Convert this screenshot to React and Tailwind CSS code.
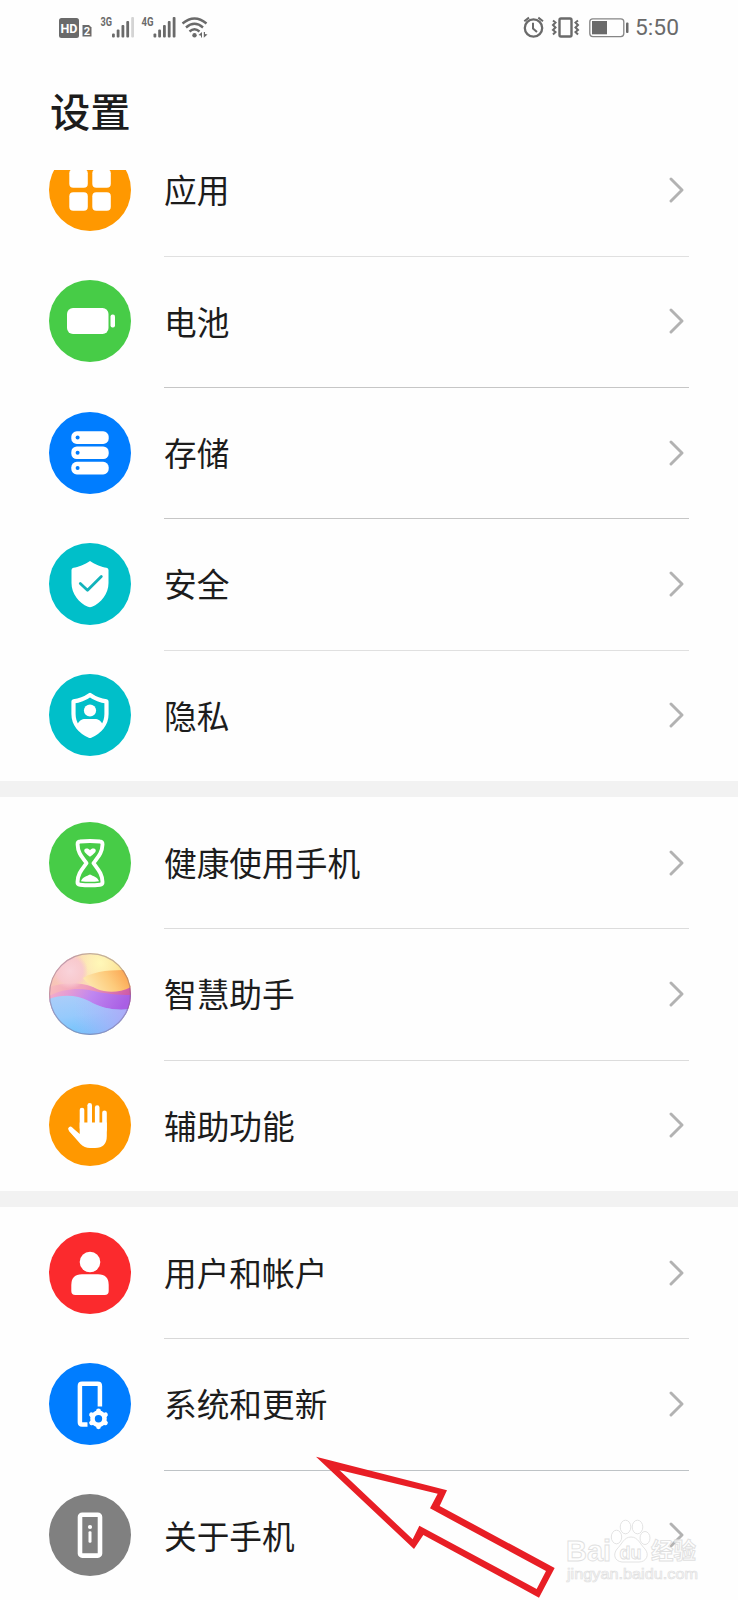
const CHEVRON = (
  <svg className="mb-px h-[26px] w-4 shrink-0" viewBox="0 0 16 26" fill="none" stroke="#b2b2b2" strokeWidth="2.9" strokeLinecap="round" strokeLinejoin="round">
    <path d="M2 2 L13 13 L2 24" />
  </svg>
);

function Disc({ fill, children }) {
  return (
    <svg className="h-[82px] w-[82px] shrink-0" viewBox="0 0 82 82">
      <circle cx="41" cy="41" r="41" fill={fill} />
      {children}
    </svg>
  );
}

const AppsIcon = () => (
  <Disc fill="#ff9800">
    <g fill="#fff">
      <rect x="20.3" y="20.3" width="18.5" height="18.5" rx="4" />
      <rect x="43.3" y="20.3" width="18.5" height="18.5" rx="4" />
      <rect x="20.3" y="43.3" width="18.5" height="18.5" rx="4" />
      <rect x="43.3" y="43.3" width="18.5" height="18.5" rx="4" />
    </g>
  </Disc>
);

const BatteryIcon = () => (
  <Disc fill="#47cc47">
    <rect x="18" y="28" width="41.5" height="26" rx="6" fill="#fff" />
    <rect x="61.5" y="34.5" width="4.5" height="13" rx="2" fill="#fff" />
  </Disc>
);

const StorageIcon = () => (
  <Disc fill="#007dff">
    {[19.3, 34.5, 49.8].map((y) => (
      <g key={y}>
        <rect x="22.3" y={y} width="37.4" height="12.6" rx="5.5" fill="#fff" />
        <circle cx="28.6" cy={y + 6.3} r="2" fill="#007dff" />
      </g>
    ))}
  </Disc>
);

const SecurityIcon = () => (
  <Disc fill="#00bfc9">
    <path d="M41 18 C46 21.5 53 24 57.5 24.8 Q59.5 25.2 59.5 27 V40 C59.5 51 52 60 43 63.8 Q41 64.6 39 63.8 C30 60 22.5 51 22.5 40 V27 Q22.5 25.2 24.5 24.8 C29 24 36 21.5 41 18 Z" fill="#fff" />
    <path d="M31.3 40.5 L38.5 47.3 L52.3 33.4" fill="none" stroke="#12b3bb" strokeWidth="2.8" strokeLinecap="round" strokeLinejoin="round" />
  </Disc>
);

const PrivacyIcon = () => (
  <Disc fill="#00bfc9">
    <path d="M41 21 C46 24.5 52 26.8 57.5 27.4 V40 C57.5 50 51 57.8 41 62 C31 57.8 24.5 50 24.5 40 V27.4 C30 26.8 36 24.5 41 21 Z" fill="none" stroke="#fff" strokeWidth="4.2" strokeLinejoin="round" />
    <circle cx="41" cy="36.5" r="6.1" fill="#fff" />
    <path d="M28.5 50.5 C30 46.5 33 45 36 45 H46 C49 45 52 46.5 53.5 50.5 C50.5 56 47 60 41 63 C35 60 31.5 56 28.5 50.5 Z" fill="#fff" />
  </Disc>
);

const HourglassIcon = () => (
  <Disc fill="#47cc47">
    <path d="M28.6 22.5 Q28.4 19.7 31 19.5 Q41 18.5 51 19.5 Q53.6 19.7 53.5 22.5 C53.2 31 49 35 44.5 41.2 C49 47.5 53.2 51.5 53.5 60 Q53.6 62.5 51 62.7 Q41 63.8 31 62.7 Q28.4 62.5 28.5 60 C28.8 51.5 33 47.5 37.5 41.2 C33 35 28.8 31 28.6 22.5 Z" fill="none" stroke="#fff" strokeWidth="3.9" strokeLinejoin="round" />
    <path d="M41 34.8 C37.5 32 35.2 30.3 35.2 28.4 C35.3 26.3 39.5 25.8 41 28.2 C42.5 25.8 46.7 26.3 46.8 28.4 C46.8 30.3 44.5 32 41 34.8 Z" fill="#fff" />
    <path d="M32 59.2 C33 55.5 38 54 41 52.5 C44 54 49 55.5 50 59.2 Q41 60.2 32 59.2 Z" fill="#fff" />
  </Disc>
);

const AssistantIcon = () => (
  <svg className="h-[82px] w-[82px] shrink-0" viewBox="0 0 82 82">
    <defs>
      <linearGradient id="orbSky" x1="0" y1="0.2" x2="1" y2="0">
        <stop offset="0" stopColor="#f7c3b8" />
        <stop offset="0.5" stopColor="#fce0b4" />
        <stop offset="1" stopColor="#fbe27c" />
      </linearGradient>
      <linearGradient id="orbOrange" x1="0" y1="0.6" x2="1" y2="0.3">
        <stop offset="0" stopColor="#fdebb4" />
        <stop offset="0.55" stopColor="#fdcb7c" />
        <stop offset="1" stopColor="#fba24e" />
      </linearGradient>
      <linearGradient id="orbPink" x1="0" y1="0" x2="1" y2="0.2">
        <stop offset="0" stopColor="#f8bdbc" />
        <stop offset="0.45" stopColor="#f0a0bc" />
        <stop offset="1" stopColor="#cf5ba8" />
      </linearGradient>
      <linearGradient id="orbViolet" x1="0" y1="0" x2="1" y2="0.2">
        <stop offset="0" stopColor="#f5b0c8" />
        <stop offset="0.25" stopColor="#e59cd4" />
        <stop offset="0.55" stopColor="#bf86f0" />
        <stop offset="1" stopColor="#a95fe4" />
      </linearGradient>
      <linearGradient id="orbBlue" x1="0.2" y1="0" x2="0.5" y2="1">
        <stop offset="0" stopColor="#aacdf9" />
        <stop offset="0.5" stopColor="#96cafc" />
        <stop offset="1" stopColor="#6cc2fb" />
      </linearGradient>
      <linearGradient id="orbRight" x1="0" y1="0" x2="1" y2="0">
        <stop offset="0.3" stopColor="#b9b4fa" stopOpacity="0" />
        <stop offset="1" stopColor="#ada8f8" />
      </linearGradient>
      <radialGradient id="orbGlow">
        <stop offset="0" stopColor="#fff8b8" />
        <stop offset="1" stopColor="#fff8b8" stopOpacity="0" />
      </radialGradient>
      <radialGradient id="orbBlush">
        <stop offset="0" stopColor="#f9d3da" />
        <stop offset="0.7" stopColor="#f8c8d0" stopOpacity="0.9" />
        <stop offset="1" stopColor="#f8c4ce" stopOpacity="0" />
      </radialGradient>
      <clipPath id="orbClip"><circle cx="41" cy="41" r="41" /></clipPath>
    </defs>
    <g clipPath="url(#orbClip)">
      <rect width="82" height="82" fill="url(#orbSky)" />
      <circle cx="51" cy="10" r="24" fill="url(#orbGlow)" />
      <path d="M0 34 C12 30 25 29 38 32 C55 38 68 38 82 32 V60 H0 Z" fill="url(#orbPink)" />
      <circle cx="21" cy="18" r="18" fill="url(#orbBlush)" />
      <path d="M34 25 C48 17 62 17 82 17 V34 C70 40 58 40 48 36 C42 33 38 30 34 25 Z" fill="url(#orbOrange)" />
      <path d="M0 43 C14 36 28 35 40 37 C56 41 70 42 82 42 V62 H0 Z" fill="url(#orbViolet)" />
      <path d="M0 46 C14 41 28 42 40 48 C54 56 68 58 82 56 V82 H0 Z" fill="url(#orbBlue)" />
      <path d="M0 46 C14 41 28 42 40 48 C54 56 68 58 82 56 V82 H0 Z" fill="url(#orbRight)" />
    </g>
    <circle cx="41" cy="41" r="40.4" fill="none" stroke="#7a5f80" strokeOpacity="0.45" strokeWidth="1.1" />
  </svg>
);

const HandIcon = () => (
  <Disc fill="#ff9800">
    <g fill="none" stroke="#fff" strokeLinecap="round" strokeWidth="4.6">
      <path d="M33 26 V44" />
      <path d="M40.7 21.2 V44" />
      <path d="M48.2 23.5 V44" />
      <path d="M55.5 28.7 V46" />
      <path d="M21.5 45 L33 57" />
    </g>
    <path d="M30.7 38.5 H57.8 V52 Q57.8 64 46 64 H41 Q35.5 64 31.5 60 L19.8 46.7 L23 43.5 L30.7 50 Z" fill="#fff" />
  </Disc>
);

const UserIcon = () => (
  <Disc fill="#fb2a2d">
    <circle cx="41" cy="30" r="10.3" fill="#fff" />
    <path d="M22.3 53 Q22.3 42.3 33 42.3 H49 Q59.7 42.3 59.7 53 V59 Q59.7 63 55.7 63 H26.3 Q22.3 63 22.3 59 Z" fill="#fff" />
  </Disc>
);

const SystemIcon = () => (
  <Disc fill="#007dff">
    <path d="M38.5 61.5 H33 Q30.9 61.5 30.9 59.3 V23 Q30.9 20.8 33 20.8 H48.7 Q50.9 20.8 50.9 23 V43.5" fill="none" stroke="#fff" strokeWidth="4.5" />
    <circle cx="49.5" cy="55.8" r="11.3" fill="#007dff" />
    <circle cx="49.5" cy="55.8" r="6" fill="none" stroke="#fff" strokeWidth="4.6" />
    <g stroke="#fff" strokeWidth="4.8" strokeLinecap="round">
      {[0, 60, 120, 180, 240, 300].map((a) => (
        <path key={a} d="M49.5 48.2 V47.8" transform={`rotate(${a} 49.5 55.8)`} />
      ))}
    </g>
  </Disc>
);

const AboutIcon = () => (
  <Disc fill="#808080">
    <rect x="31" y="20.7" width="20" height="40.9" rx="2.2" fill="none" stroke="#fff" strokeWidth="4.6" />
    <circle cx="41" cy="33" r="2.1" fill="#fff" />
    <rect x="39.5" y="37.3" width="3" height="11.5" rx="1.2" fill="#fff" />
  </Disc>
);

const GROUPS = [
  [
    { label: "应用", Icon: AppsIcon, line: "border-transparent", iconClass: "[clip-path:inset(21px_0_0_0)]" },
    { label: "电池", Icon: BatteryIcon, line: "border-[#e0e0e0]" },
    { label: "存储", Icon: StorageIcon, line: "border-[#c6c6c6]" },
    { label: "安全", Icon: SecurityIcon, line: "border-[#c6c6c6]" },
    { label: "隐私", Icon: PrivacyIcon, line: "border-[#e0e0e0]" },
  ],
  [
    { label: "健康使用手机", Icon: HourglassIcon, line: "border-transparent" },
    { label: "智慧助手", Icon: AssistantIcon, line: "border-[#dcdcdc]" },
    { label: "辅助功能", Icon: HandIcon, line: "border-[#dcdcdc]" },
  ],
  [
    { label: "用户和帐户", Icon: UserIcon, line: "border-transparent" },
    { label: "系统和更新", Icon: SystemIcon, line: "border-[#d8d8d8]" },
    { label: "关于手机", Icon: AboutIcon, line: "border-[#bec3c6]" },
  ],
];

function Row({ label, Icon, line, iconClass = "" }) {
  return (
    <li className="flex h-[131.33px] pl-[49px]">
      <div className="flex items-center pr-[33px]">
        <div className={iconClass}>
          <Icon />
        </div>
      </div>
      <div className={`flex w-[525px] items-center justify-between border-t pr-1 ${line}`}>
        <span className="mb-[2px] text-[32.7px] leading-none text-[#1c1c1c]">{label}</span>
        {CHEVRON}
      </div>
    </li>
  );
}

function StatusBar() {
  return (
    <header className="flex h-[56px] shrink-0 items-center justify-between pr-[59px] pl-[56px]">
      <svg className="h-[56px] w-[160px]" viewBox="56 0 160 56" fontFamily="Roboto, sans-serif" fill="#6a6a6a">
        <rect x="59" y="18" width="20" height="20" rx="2.5" />
        <text x="60.5" y="33" fontSize="13.5" fontWeight="700" fill="#fff" textLength="17" lengthAdjust="spacingAndGlyphs">HD</text>
        <path d="M82.5 25 H89 L91.5 27.5 V36.5 H82.5 Z" />
        <text x="83.8" y="35" fontSize="11" fontWeight="700" fill="#fff" textLength="6.4" lengthAdjust="spacingAndGlyphs">2</text>
        <text x="100.5" y="26.3" fontSize="13" fontWeight="700" textLength="11.5" lengthAdjust="spacingAndGlyphs">3G</text>
        <text x="141.5" y="26.3" fontSize="13" fontWeight="700" textLength="12" lengthAdjust="spacingAndGlyphs">4G</text>
        {[112, 153.5].map((x, i) => (
          <g key={x}>
            <rect x={x} y="33.5" width="2.8" height="4" rx="1" />
            <rect x={x + 4.7} y="29.5" width="2.8" height="8" rx="1" />
            <rect x={x + 9.5} y="25" width="2.8" height="12.5" rx="1" />
            <rect x={x + 14.3} y="21" width="2.8" height="16.5" rx="1" />
            <rect x={x + 19.2} y="17" width="2.8" height="20.5" rx="1" fill={i ? "#6a6a6a" : "#d4d4d4"} />
          </g>
        ))}
        <g fill="none" stroke="#6a6a6a" strokeWidth="2.4">
          <path d="M182.5 23.5 Q194.5 13.5 206.5 23.5" />
          <path d="M186 27.5 Q194.5 20 203 27.5" />
          <path d="M189.5 31.5 Q194.5 27 199.5 31.5" />
        </g>
        <circle cx="194.5" cy="35.2" r="2.2" />
        <path d="M198.5 35 L202 32 V37.5 H201 V35.8 Z M203.8 32 H205 V34 L207.5 34.6 L203.8 37.8 Z" />
      </svg>
      <div className="flex items-center">
        <svg className="h-[56px] w-[110px]" viewBox="520 0 110 56" fill="none" stroke="#6a6a6a">
          <circle cx="533.5" cy="28" r="8.7" strokeWidth="2.3" />
          <path d="M533 22.8 V28.5 L537 32" strokeWidth="2" />
          <path d="M524.3 21.3 L529 17.6 M543 21.3 L538.3 17.6" strokeWidth="2" />
          <rect x="559.5" y="18.5" width="12" height="18" rx="1.5" strokeWidth="2.4" />
          <path d="M553 20.5 L555.5 22.5 L553 25 L555.5 27.5 L553 30 L555.5 32 L553 34.5 M578 20.5 L575.5 22.5 L578 25 L575.5 27.5 L578 30 L575.5 32 L578 34.5" strokeWidth="2" />
          <rect x="589.8" y="18.8" width="34" height="17.8" rx="3" strokeWidth="1.3" stroke="#858585" />
          <rect x="592" y="21" width="15" height="13.3" fill="#6a6a6a" stroke="none" />
          <rect x="626" y="22.5" width="2.5" height="10.5" rx="1" fill="#6a6a6a" stroke="none" />
        </svg>
        <span className="ml-[5px] pt-px font-[Roboto,sans-serif] text-[22.8px] leading-none text-[#6a6a6a]">5:50</span>
      </div>
    </header>
  );
}

function Watermark() {
  return (
    <svg className="absolute top-[1515px] left-[562px] h-[72px] w-[142px]" viewBox="562 1515 142 72" fill="#fff" fillOpacity="0.75" stroke="#e0e0e0" strokeWidth="0.9" fontFamily="'Liberation Sans', 'Noto Sans CJK SC', sans-serif">
      <text x="566" y="1561" fontSize="30" fontWeight="700" textLength="45" lengthAdjust="spacingAndGlyphs">Bai</text>
      <ellipse cx="616.5" cy="1537" rx="5.2" ry="6.8" />
      <ellipse cx="625.5" cy="1527" rx="5.3" ry="6.8" />
      <ellipse cx="637.5" cy="1527" rx="5.3" ry="6.8" />
      <ellipse cx="645" cy="1538" rx="5" ry="6.5" />
      <path d="M631 1537 C638 1537 640 1544 645 1549 C650 1555 646 1562 639 1562 H622 C614 1561 613 1554 617 1549 C622 1544 624 1537 631 1537 Z" />
      <text x="619.5" y="1558.5" fontSize="19" fontWeight="700" textLength="22" lengthAdjust="spacingAndGlyphs">du</text>
      <text x="651" y="1559" fontSize="22.5" fontWeight="700" fontFamily="'Noto Sans CJK SC', sans-serif">经验</text>
      <text x="567" y="1578.5" fontSize="15" strokeWidth="0.7" textLength="131" lengthAdjust="spacingAndGlyphs">jingyan.baidu.com</text>
    </svg>
  );
}

function PointerArrow() {
  return (
    <svg className="absolute top-[1456px] left-[315px] h-[144px] w-[241px]" viewBox="45 78 723 432">
      <path
        fill="#e81e25"
        fillRule="evenodd"
        d="M48 80 L441 181 L419 228 L764 414 L717 503 L370 315 L342 357 Z M118 120 L413 191 L390 235 L738 423 L710 477 L358 287 L338 328 Z"
      />
    </svg>
  );
}

export default function App() {
  return (
    <div className="relative flex h-[1600px] w-[738px] flex-col overflow-hidden bg-[#fefefe] font-['Noto_Sans_CJK_SC',sans-serif]">
      <StatusBar />
      <h1 className="flex h-[104px] shrink-0 items-center pt-1 pl-[50px] text-[40.3px] leading-[60px] font-medium text-[#1c1c1c]">设置</h1>
      <main className="flex-1 overflow-hidden">
        <div className="-mt-[35.6px]">
          {GROUPS.map((rows, i) => (
            <ul key={i} className={i ? "border-t-[16px] border-[#f2f2f2]" : ""}>
              {rows.map((row) => (
                <Row key={row.label} {...row} />
              ))}
            </ul>
          ))}
        </div>
      </main>
      <Watermark />
      <PointerArrow />
    </div>
  );
}
